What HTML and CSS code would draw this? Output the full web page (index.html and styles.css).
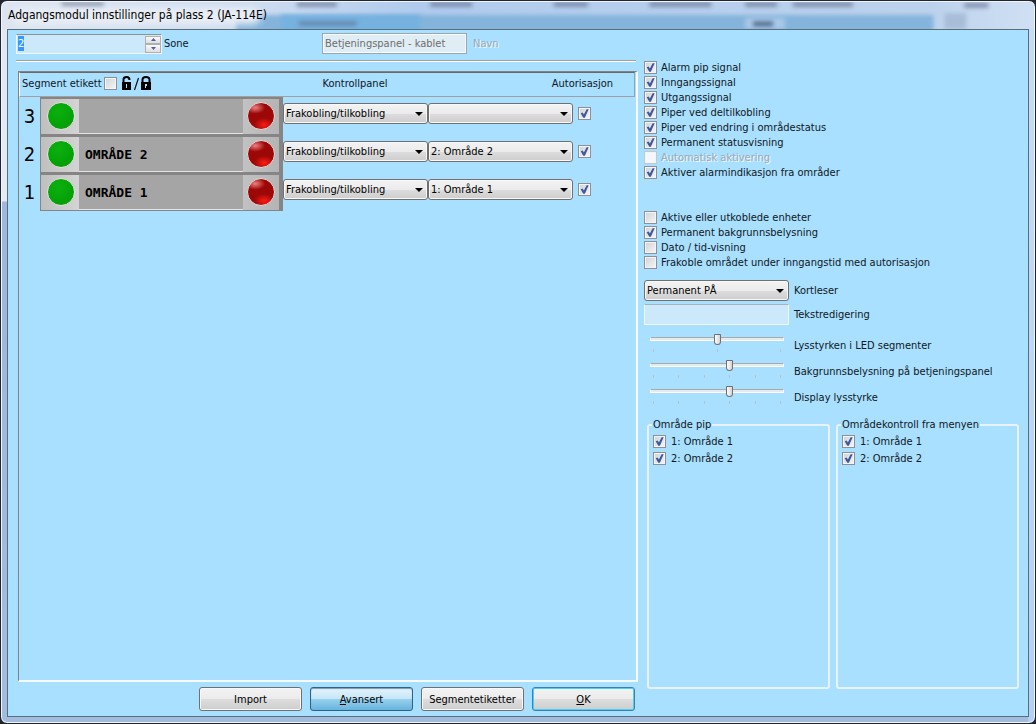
FILE: index.html
```html
<!DOCTYPE html>
<html lang="nb">
<head>
<meta charset="utf-8">
<title>Adgangsmodul innstillinger på plass 2 (JA-114E)</title>
<link rel="stylesheet" href="styles.css">
</head>
<body>
<div class="window">
  <header class="titlebar">
    <svg class="glass" viewBox="0 0 1036 29" preserveAspectRatio="none" aria-hidden="true">
      <defs>
        <linearGradient id="top" x1="0" x2="1"><stop offset="0" stop-color="#dce5f0"/><stop offset=".26" stop-color="#cbdbf0"/><stop offset=".4" stop-color="#b0cbed"/><stop offset=".9" stop-color="#bcd2ec"/><stop offset="1" stop-color="#d0e0f4"/></linearGradient>
        <filter id="soft" x="-20%" y="-60%" width="140%" height="220%"><feGaussianBlur stdDeviation="4"/></filter>
        <filter id="fine" x="-20%" y="-80%" width="140%" height="260%"><feGaussianBlur stdDeviation="2"/></filter>
      </defs>
      <rect width="1036" height="29" fill="url(#top)"/>
      <rect x="235" y="14" width="700" height="24" fill="#84b4dc" filter="url(#fine)"/>
      <rect x="280" y="14" width="140" height="24" fill="#76b2e0" filter="url(#fine)"/>
      <rect x="10" y="6" width="250" height="18" rx="9" fill="#e9eef5" filter="url(#soft)"/>
      <g fill="#5a6684" opacity=".65" filter="url(#fine)">
        <rect x="60" y="0" width="42" height="4"/><rect x="296" y="0" width="40" height="5"/><rect x="430" y="0" width="42" height="5"/><rect x="554" y="0" width="34" height="5"/><rect x="650" y="0" width="62" height="5"/><rect x="746" y="0" width="32" height="5"/><rect x="794" y="0" width="60" height="5"/><rect x="966" y="1" width="24" height="5"/><rect x="298" y="21" width="58" height="4"/>
      </g>
      <rect x="746" y="17" width="40" height="12" fill="#a9c8e8" filter="url(#fine)"/>
      <rect x="754" y="21" width="20" height="5" fill="#4c6788" filter="url(#fine)"/>
      <rect x="946" y="12" width="22" height="17" fill="#a8bdd8" filter="url(#fine)"/>
    </svg>
    <h1 class="title">Adgangsmodul innstillinger på plass 2 (JA-114E)</h1>
  </header>

  <main class="client">
    <section class="left">
      <div class="top-row">
        <div class="spin">
          <input id="sone" class="spin-input" type="text" value="2">
          <span class="spin-buttons">
            <button type="button" aria-label="Opp"><svg viewBox="0 0 5 3"><path d="M0 3L2.500 0L5 3Z"/></svg></button>
            <button type="button" aria-label="Ned"><svg viewBox="0 0 5 3"><path d="M0 0L2.500 3L5 0Z"/></svg></button>
          </span>
        </div>
        <label class="sone-label" for="sone">Sone</label>
        <input id="navn" class="name-input" type="text" value="Betjeningspanel - kablet" disabled>
        <label class="disabled" for="navn">Navn</label>
      </div>
      <hr class="rule">

      <div class="panel">
        <div class="panel-head">
          <div class="head-segment">
            <label for="seg">Segment etikett</label>
            <input id="seg" class="check" type="checkbox">
            <svg class="locks" viewBox="0 0 31 16" aria-hidden="true">
              <path fill="none" stroke="#000" stroke-width="2" d="M2.500 8V4.500Q2.500 2 5.500 2Q8.500 2 8.500 5M21.500 8V4.500Q21.500 2 25 2Q28.500 2 28.500 4.500V8"/>
              <path d="M1 7H10V15H1ZM20 7H30V15H20Z"/>
              <path stroke="#111" stroke-width="1.200" d="M17.500 3L13.500 15"/>
              <path fill="#a9dfff" d="M5 9H6V13H5ZM24 9H26V11H25V13H24Z"/>
            </svg>
          </div>
          <span class="head-control">Kontrollpanel</span>
          <span class="head-auth">Autorisasjon</span>
        </div>

        <div class="segment-row">
          <span class="number">3</span>
          <div class="segment"><span class="led-cell"><i class="led green"></i></span><span class="segment-name"></span><span class="led-cell red-cell"><i class="led red"></i></span></div>
          <div class="combo"><select aria-label="Funksjon 3"><option>Frakobling/tilkobling</option></select><svg viewBox="0 0 8 4"><path d="M0 0H8L4 4Z"/></svg></div>
          <div class="combo"><select aria-label="Område 3"><option></option></select><svg viewBox="0 0 8 4"><path d="M0 0H8L4 4Z"/></svg></div>
          <input class="check auth" type="checkbox" aria-label="Autorisasjon 3" checked>
        </div>
        <div class="segment-row">
          <span class="number">2</span>
          <div class="segment"><span class="led-cell"><i class="led green"></i></span><span class="segment-name">OMRÅDE 2</span><span class="led-cell red-cell"><i class="led red"></i></span></div>
          <div class="combo"><select aria-label="Funksjon 2"><option>Frakobling/tilkobling</option></select><svg viewBox="0 0 8 4"><path d="M0 0H8L4 4Z"/></svg></div>
          <div class="combo"><select aria-label="Område 2"><option>2: Område 2</option></select><svg viewBox="0 0 8 4"><path d="M0 0H8L4 4Z"/></svg></div>
          <input class="check auth" type="checkbox" aria-label="Autorisasjon 2" checked>
        </div>
        <div class="segment-row">
          <span class="number">1</span>
          <div class="segment"><span class="led-cell"><i class="led green"></i></span><span class="segment-name">OMRÅDE 1</span><span class="led-cell red-cell"><i class="led red"></i></span></div>
          <div class="combo"><select aria-label="Funksjon 1"><option>Frakobling/tilkobling</option></select><svg viewBox="0 0 8 4"><path d="M0 0H8L4 4Z"/></svg></div>
          <div class="combo"><select aria-label="Område 1"><option>1: Område 1</option></select><svg viewBox="0 0 8 4"><path d="M0 0H8L4 4Z"/></svg></div>
          <input class="check auth" type="checkbox" aria-label="Autorisasjon 1" checked>
        </div>
      </div>

      <footer class="buttons">
        <button class="btn" type="button">Import</button>
        <button class="btn pressed" type="button"><span><u>A</u>vansert</span></button>
        <button class="btn" type="button">Segmentetiketter</button>
        <button class="btn default" type="button"><span><u>O</u>K</span></button>
      </footer>
    </section>

    <section class="right">
      <div class="options">
        <label class="option"><input class="check" type="checkbox" checked>Alarm pip signal</label>
        <label class="option"><input class="check" type="checkbox" checked>Inngangssignal</label>
        <label class="option"><input class="check" type="checkbox" checked>Utgangssignal</label>
        <label class="option"><input class="check" type="checkbox" checked>Piper ved deltilkobling</label>
        <label class="option"><input class="check" type="checkbox" checked>Piper ved endring i områdestatus</label>
        <label class="option"><input class="check" type="checkbox" checked>Permanent statusvisning</label>
        <label class="option disabled"><input class="check" type="checkbox" disabled>Automatisk aktivering</label>
        <label class="option"><input class="check" type="checkbox" checked>Aktiver alarmindikasjon fra områder</label>
      </div>
      <div class="options display-options">
        <label class="option"><input class="check" type="checkbox">Aktive eller utkoblede enheter</label>
        <label class="option"><input class="check" type="checkbox" checked>Permanent bakgrunnsbelysning</label>
        <label class="option"><input class="check" type="checkbox">Dato / tid-visning</label>
        <label class="option"><input class="check" type="checkbox">Frakoble området under inngangstid med autorisasjon</label>
      </div>
      <div class="fields">
        <div class="combo"><select id="kort"><option>Permanent PÅ</option></select><svg viewBox="0 0 8 4"><path d="M0 0H8L4 4Z"/></svg></div>
        <label for="kort">Kortleser</label>
        <input id="tekst" class="text-input" type="text">
        <label for="tekst">Tekstredigering</label>
      </div>
      <div class="sliders">
        <div class="slider"><input id="led" type="range" min="0" max="2" value="1"><span class="ticks"><i></i><i></i><i></i></span></div>
        <label for="led">Lysstyrken i LED segmenter</label>
        <div class="slider"><input id="bak" type="range" min="0" max="5" value="3"><span class="ticks"><i></i><i></i><i></i><i></i><i></i><i></i></span></div>
        <label for="bak">Bakgrunnsbelysning på betjeningspanel</label>
        <div class="slider"><input id="disp" type="range" min="0" max="5" value="3"><span class="ticks"><i></i><i></i><i></i><i></i><i></i><i></i></span></div>
        <label for="disp">Display lysstyrke</label>
      </div>
      <div class="groups">
        <fieldset class="group">
          <legend>Område pip</legend>
          <label class="option"><input class="check" type="checkbox" checked>1: Område 1</label>
          <label class="option"><input class="check" type="checkbox" checked>2: Område 2</label>
        </fieldset>
        <fieldset class="group">
          <legend>Områdekontroll fra menyen</legend>
          <label class="option"><input class="check" type="checkbox" checked>1: Område 1</label>
          <label class="option"><input class="check" type="checkbox" checked>2: Område 2</label>
        </fieldset>
      </div>
    </section>
  </main>
</div>
<script src="script.js"></script>
</body>
</html>
```
FILE: script.js
```js
const zone = document.getElementById("sone");
zone.focus();
zone.select();
```
FILE: styles.css
```css
* { box-sizing: border-box; }

body {
  margin: 0;
  background: #22252e;
  color: #101820;
  font: 11px/15px "DejaVu Sans Condensed", "Noto Sans", sans-serif;
}

input, select, button {
  margin: 0;
  font: inherit;
  color: inherit;
}

.window {
  display: flex;
  flex-direction: column;
  height: 100vh;
  padding: 0 6px 6px;
  border: 1px solid #22242e;
  border-radius: 7px;
  overflow: hidden;
  background:
    linear-gradient(#c9dcf4, #b4d0f3) right / 7px 100% no-repeat,
    linear-gradient(#dfe8f4 0, #e4ebf5 200px, #9db8dc 201px, #a3bcde 100%);
  box-shadow: inset 0 0 0 1px #eff6fd;
}

.titlebar {
  position: relative;
  height: 28px;
  flex: none;
  margin: 0 -5px;
}

.glass {
  position: absolute;
  inset: 1px 0 0;
  width: 100%;
  height: 27px;
  border-radius: 6px 6px 0 0;
}

.title {
  position: relative;
  margin: 0;
  padding: 6px 6px 0;
  color: #000;
  font-size: 12px;
  font-weight: normal;
  line-height: 16px;
}

.client {
  display: flex;
  flex: 1;
  min-height: 0;
  gap: 6px;
  padding: 2px 8px 5px;
  border: 1px solid #596e7b;
  background: #a9dfff;
}

.left {
  display: flex;
  flex: 622 1 0;
  min-width: 0;
  flex-direction: column;
}

.top-row {
  display: flex;
  align-items: center;
  height: 23px;
}

.spin {
  display: flex;
  width: 146px;
  height: 20px;
  border: 1px solid #eef6fc;
  border-top-color: #8d9298;
  background: #cce8fb;
}

.spin-input {
  flex: 1;
  min-width: 0;
  padding: 0 1px;
  border: 0;
  outline: 0;
  background: transparent;
}

.spin-input::selection {
  background: #3399ff;
  color: #fff;
}

.spin-buttons {
  display: grid;
  width: 16px;
  padding: 1px 0 0;
}

.spin-buttons button {
  display: grid;
  place-items: center;
  padding: 0;
  border: 1px solid #b0b0b0;
  background: linear-gradient(#fafafa, #dedede);
}

.spin-buttons svg {
  width: 5px;
  height: 3px;
  fill: #4a62a0;
}

.sone-label { width: 160px; padding-left: 2px; }

.name-input {
  width: 145px;
  height: 21px;
  margin-right: 6px;
  padding: 0 2px;
  border: 1px solid #9aa7af;
  outline: 1px solid #f5fbff;
  outline-offset: -2px;
  background: #e0edf4;
  color: #6d6d6d;
}

.disabled { color: #a0a9b0; text-shadow: 1px 1px 0 #eef8ff; }

.rule {
  flex: none;
  width: calc(100% - 2px);
  height: 2px;
  margin: 5px 0 9px;
  border: 0;
  border-top: 1px solid #a0a0a0;
  background: #fff;
}

.panel {
  flex: 1;
  min-height: 0;
  margin-left: 2px;
  border: 2px solid #f5fbff;
  border-left: 1px solid #828282;
  border-top: 1px solid #828282;
}

.panel-head {
  display: flex;
  align-items: center;
  height: 25px;
  margin-right: 1px;
  padding-bottom: 3px;
  border: 1px solid #a0a0a0;
  border-top: 1px solid #696969;
  border-left: 1px solid #fff;
}

.head-segment {
  display: flex;
  align-items: center;
  flex: none;
  gap: 2px;
  width: 264px;
  padding-left: 2px;
}

.head-control { width: 142px; text-align: center; }
.head-auth { margin-left: auto; padding-right: 21px; }
.locks { width: 31px; height: 16px; margin-left: 2px; }

.segment-row {
  display: flex;
  height: 38px;
}

.number {
  flex: none;
  width: 21px;
  text-align: center;
  color: #000;
  font-size: 20px;
  line-height: 38px;
}

.segment {
  display: flex;
  flex: none;
  width: 243px;
  height: 38px;
  padding-right: 3px;
  border: 1px solid #858585;
  border-top-width: 2px;
  background: #a5a5a5;
  box-shadow: inset -3px 0 #858585, inset 0 -1px #e5e5e5;
}

.led-cell {
  display: grid;
  place-items: center;
  width: 38px;
  padding: 0 0 2px 2px;
  background: linear-gradient(90deg, #bfbfbf, #d4d4d4);
}

.red-cell { width: 36px; padding-left: 0; background: linear-gradient(90deg, #c2c2c2, #b4b4b4); }

.segment-name {
  flex: 1;
  padding: 2px 0 0 6px;
  color: #000;
  font: bold 13px/32px "DejaVu Sans Mono", monospace;
}

.led {
  width: 28px;
  height: 28px;
  border: 1px solid #dedede;
  border-radius: 50%;
}

.green { background: radial-gradient(circle at 40% 30%, #0cb00e, #05a207 60%, #119b0b); }

.red {
  background:
    radial-gradient(ellipse 10px 7px at 62% 84%, #ff1a12, transparent),
    radial-gradient(ellipse 10px 6px at 28% 18%, #ee8080, transparent),
    #9c0808;
}

.combo {
  position: relative;
  flex: none;
  width: 145px;
  height: 21px;
}

.segment-row .combo { margin-top: 6px; }

.combo select {
  display: block;
  width: 100%;
  height: 100%;
  padding: 0 2px;
  appearance: none;
  border: 1px solid #707070;
  border-radius: 3px;
  outline: 0;
  background: linear-gradient(#f3f3f3 0, #ebebeb 50%, #dddddd 51%, #cdcdcd 100%);
  box-shadow: inset 0 0 0 1px #f8f8f8;
  color: #000;
}

.combo svg {
  position: absolute;
  top: 9px;
  right: 5px;
  width: 8px;
  height: 4px;
  pointer-events: none;
}

.check {
  position: relative;
  flex: none;
  width: 13px;
  height: 13px;
  appearance: none;
  border: 1px solid #8b9196;
  background: linear-gradient(135deg, #cfd2d6, #f6f6f6);
  box-shadow: inset 0 0 0 1px #f4f4f4;
}

.check:checked::after {
  content: "";
  position: absolute;
  inset: 1px;
  background: #3f579b;
  clip-path: polygon(8% 48%, 30% 40%, 43% 60%, 74% 2%, 96% 2%, 54% 98%, 36% 98%);
}

.check:disabled { border-color: #c2c8cc; background: #f4f8fa; }
.auth { margin: 10px 0 0 5px; }

.buttons {
  display: flex;
  justify-content: flex-end;
  gap: 8px;
  padding: 5px 3px 0 0;
}

.btn {
  width: 103px;
  height: 24px;
  padding: 0;
  border: 1px solid #707070;
  border-radius: 3px;
  background: linear-gradient(#f3f3f3 0, #ebebeb 50%, #dddddd 51%, #cdcdcd 100%);
  box-shadow: inset 0 0 0 1px #f8f8f8;
  color: #000;
}

.pressed {
  border-color: #2c628b;
  background: linear-gradient(#e5f4fc 0, #c4e5f6 50%, #98d1ef 51%, #68b3db 100%);
  box-shadow: inset 0 1px 1px #7899ab;
}

.default { border-color: #3c7fb1; box-shadow: inset 0 0 0 1px #48cffa; }

.right {
  display: flex;
  flex: 376 1 0;
  min-width: 0;
  flex-direction: column;
  padding: 28px 0 22px;
}

.options { display: flex; flex-direction: column; }
.display-options { margin: 30px 0 10px; }

.option {
  display: flex;
  align-items: center;
  height: 15px;
  gap: 4px;
  white-space: nowrap;
}

.fields {
  display: grid;
  grid-template-columns: 145px 1fr;
  align-items: center;
  gap: 3px 5px;
}

.text-input {
  height: 21px;
  padding: 0 2px;
  border: 1px solid #eef6fc;
  border-top-color: #a5b3bd;
  background: #cce8fb;
}

.sliders {
  display: grid;
  grid-template-columns: 134px 1fr;
  grid-auto-rows: 26px;
  column-gap: 10px;
  align-items: center;
  padding: 7px 0 0 6px;
}

.slider {
  display: flex;
  flex-direction: column;
  align-self: start;
}

.slider input {
  width: 100%;
  height: 14px;
  appearance: none;
  background: transparent;
}

.slider input::-webkit-slider-runnable-track {
  height: 4px;
  border: 1px solid #fff;
  border-top-color: #a5acb0;
  background: #e7eaea;
}

.slider input::-webkit-slider-thumb {
  width: 7px;
  height: 11px;
  margin-top: -4px;
  appearance: none;
  border: 1px solid #707070;
  border-radius: 1px 1px 4px 4px;
  background: linear-gradient(90deg, #fff, #d4d4d4);
}

.ticks {
  display: flex;
  justify-content: space-between;
  padding: 3px 3px 0;
}

.ticks i { width: 1px; height: 3px; background: #b6c3cb; }

.groups {
  display: grid;
  flex: 1;
  grid-template-columns: 1fr 1fr;
  gap: 6px;
  padding: 8px 1px 0 3px;
}

.group {
  min-width: 0;
  margin: 0;
  padding: 1px 4px;
  border: 2px solid #e8f2fa;
  border-radius: 3px;
}

.group legend { padding: 0 1px; line-height: 14px; margin-left: -1px; }
.group .option { height: 17px; gap: 5px; }
```
